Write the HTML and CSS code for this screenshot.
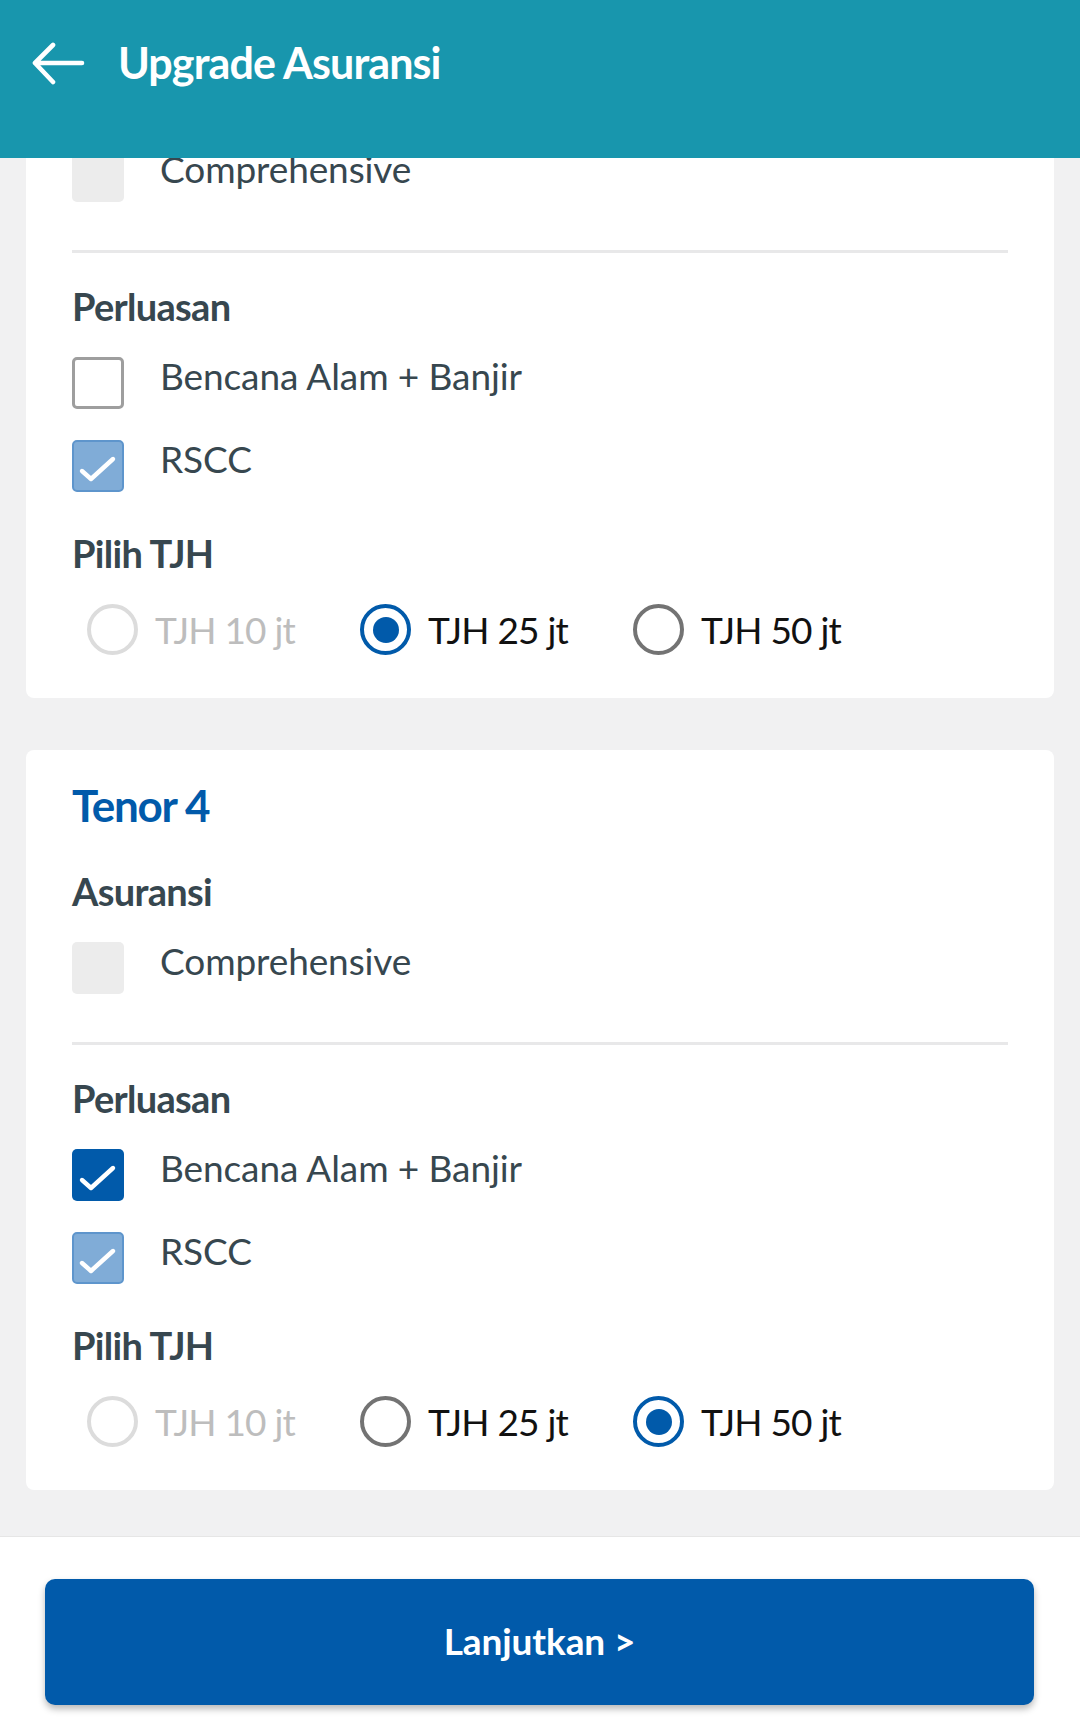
FILE: index.html
```html
<!DOCTYPE html>
<html lang="id">
<head>
<meta charset="utf-8">
<title>Upgrade Asuransi</title>
<link rel="stylesheet" href="styles.css">
</head>
<body>
<div class="app">
  <header class="topbar">
    <svg class="back" width="54" height="46" viewBox="0 0 54 46" aria-hidden="true">
      <path d="M3 21H50M21 3L3 21L21 40" fill="none" stroke="#fff" stroke-width="4.6" stroke-linecap="round" stroke-linejoin="round"/>
    </svg>
    <h1 class="title">Upgrade Asuransi</h1>
  </header>

  <main class="main">
    <div class="list">
      <section class="card">
        <h2 class="card-title">Tenor 3</h2>
        <h3 class="label first">Asuransi</h3>
        <div class="check-row">
          <span class="box box-disabled"></span>
          <span class="check-text">Comprehensive</span>
        </div>
        <hr class="divider">
        <h3 class="label">Perluasan</h3>
        <div class="check-row">
          <span class="box box-empty"></span>
          <span class="check-text">Bencana Alam + Banjir</span>
        </div>
        <div class="check-row next">
          <span class="box box-locked"><svg viewBox="0 0 52 52"><path d="M10 31L19 39L41 19" fill="none" stroke="#fff" stroke-width="4.4" stroke-linecap="round" stroke-linejoin="round"/></svg></span>
          <span class="check-text">RSCC</span>
        </div>
        <h3 class="label tjh">Pilih TJH</h3>
        <div class="radios">
          <div class="radio disabled"><span class="circle"></span><span class="radio-text">TJH 10 jt</span></div>
          <div class="radio selected"><span class="circle"></span><span class="radio-text">TJH 25 jt</span></div>
          <div class="radio"><span class="circle"></span><span class="radio-text">TJH 50 jt</span></div>
        </div>
      </section>

      <section class="card">
        <h2 class="card-title">Tenor 4</h2>
        <h3 class="label first">Asuransi</h3>
        <div class="check-row">
          <span class="box box-disabled"></span>
          <span class="check-text">Comprehensive</span>
        </div>
        <hr class="divider">
        <h3 class="label">Perluasan</h3>
        <div class="check-row">
          <span class="box box-checked"><svg viewBox="0 0 52 52"><path d="M10 31L19 39L41 19" fill="none" stroke="#fff" stroke-width="4.4" stroke-linecap="round" stroke-linejoin="round"/></svg></span>
          <span class="check-text">Bencana Alam + Banjir</span>
        </div>
        <div class="check-row next">
          <span class="box box-locked"><svg viewBox="0 0 52 52"><path d="M10 31L19 39L41 19" fill="none" stroke="#fff" stroke-width="4.4" stroke-linecap="round" stroke-linejoin="round"/></svg></span>
          <span class="check-text">RSCC</span>
        </div>
        <h3 class="label tjh">Pilih TJH</h3>
        <div class="radios">
          <div class="radio disabled"><span class="circle"></span><span class="radio-text">TJH 10 jt</span></div>
          <div class="radio"><span class="circle"></span><span class="radio-text">TJH 25 jt</span></div>
          <div class="radio selected"><span class="circle"></span><span class="radio-text">TJH 50 jt</span></div>
        </div>
      </section>
    </div>
  </main>

  <footer class="footer">
    <button class="btn" type="button">Lanjutkan &gt;</button>
  </footer>
</div>
</body>
</html>
```

FILE: styles.css
```css
* { box-sizing: border-box; }

html, body {
  margin: 0;
  padding: 0;
}

body {
  width: 1080px;
  height: 1731px;
  font-family: Lato, "Open Sans", sans-serif;
  background: #f1f1f2;
  overflow: hidden;
}

.app {
  display: flex;
  flex-direction: column;
  height: 1731px;
}

.topbar {
  position: relative;
  z-index: 2;
  height: 158px;
  flex: 0 0 158px;
  background: #1896ad;
  display: flex;
  align-items: flex-start;
  padding: 40px 0 0 32px;
}

.back {
  display: block;
  margin-top: 2px;
}

.title {
  margin: 0 0 0 32px;
  color: #fff;
  font-weight: 700;
  font-size: 43px;
  line-height: 46px;
  letter-spacing: -0.9px;
}

.main {
  flex: 1 1 auto;
  overflow: hidden;
  background: #f1f1f2;
}

.list {
  margin-top: -200px;
  display: flex;
  flex-direction: column;
  gap: 52px;
  padding: 0 26px;
}

.card {
  background: #fff;
  border-radius: 8px;
  padding: 29px 46px 43px 46px;
}

.card-title {
  margin: 0;
  color: #015aaa;
  font-weight: 700;
  font-size: 44px;
  line-height: 52px;
  letter-spacing: -1.3px;
}

.label {
  margin: 29px 0 0 0;
  color: #37474f;
  font-weight: 700;
  font-size: 38px;
  line-height: 48px;
  letter-spacing: -0.7px;
}

.label.first { margin-top: 36px; }
.label.tjh { margin-top: 37px; }

.check-row {
  display: flex;
  align-items: flex-start;
  margin-top: 27px;
}

.check-row.next { margin-top: 31px; }

.box {
  flex: 0 0 52px;
  width: 52px;
  height: 52px;
  border-radius: 5px;
  display: block;
}

.box svg {
  display: block;
  width: 100%;
  height: 100%;
}

.box-disabled { background: #ececec; }

.box-empty {
  background: #fff;
  border: 3px solid #9e9e9e;
}

.box-checked { background: #015aaa; }

.box-locked {
  background: #80acd7;
  border: 2px solid #5e95cc;
}

.box-locked svg { margin: -2px; width: 52px; height: 52px; }

.check-text {
  margin-left: 36px;
  color: #37474f;
  font-size: 37px;
  line-height: 38px;
  letter-spacing: -0.1px;
}

.divider {
  border: 0;
  height: 3px;
  background: #e8e8e9;
  margin: 48px 0 0 0;
}

.radios {
  display: flex;
  margin-top: 27px;
}

.radio {
  flex: 0 0 273px;
  display: flex;
  align-items: center;
  height: 51px;
}

.circle {
  flex: 0 0 51px;
  width: 51px;
  height: 51px;
  margin-left: 15px;
  border-radius: 50%;
  border: 4.5px solid #737373;
  position: relative;
}

.radio.disabled .circle { border-color: #dcdcdc; }

.radio.selected .circle { border-color: #015aaa; }

.radio.selected .circle::after {
  content: "";
  position: absolute;
  left: 50%;
  top: 50%;
  width: 26px;
  height: 26px;
  margin: -13px 0 0 -13px;
  border-radius: 50%;
  background: #015aaa;
}

.radio-text {
  margin-left: 17px;
  color: #111;
  font-size: 37px;
  line-height: 52px;
  letter-spacing: -0.8px;
}

.radio.disabled .radio-text { color: #bdbdbd; }

.footer {
  flex: 0 0 195px;
  height: 195px;
  background: #fff;
  border-top: 1px solid #e6e6e6;
  padding: 42px 46px 0 45px;
}

.btn {
  display: block;
  width: 100%;
  height: 126px;
  border: 0;
  border-radius: 10px;
  background: #015aaa;
  color: #fff;
  font-family: Lato, "Open Sans", sans-serif;
  font-weight: 700;
  font-size: 37px;
  letter-spacing: -0.1px;
  box-shadow: 0 4px 7px rgba(0, 0, 0, 0.28);
  padding: 0 0 4px 0;
}
```
